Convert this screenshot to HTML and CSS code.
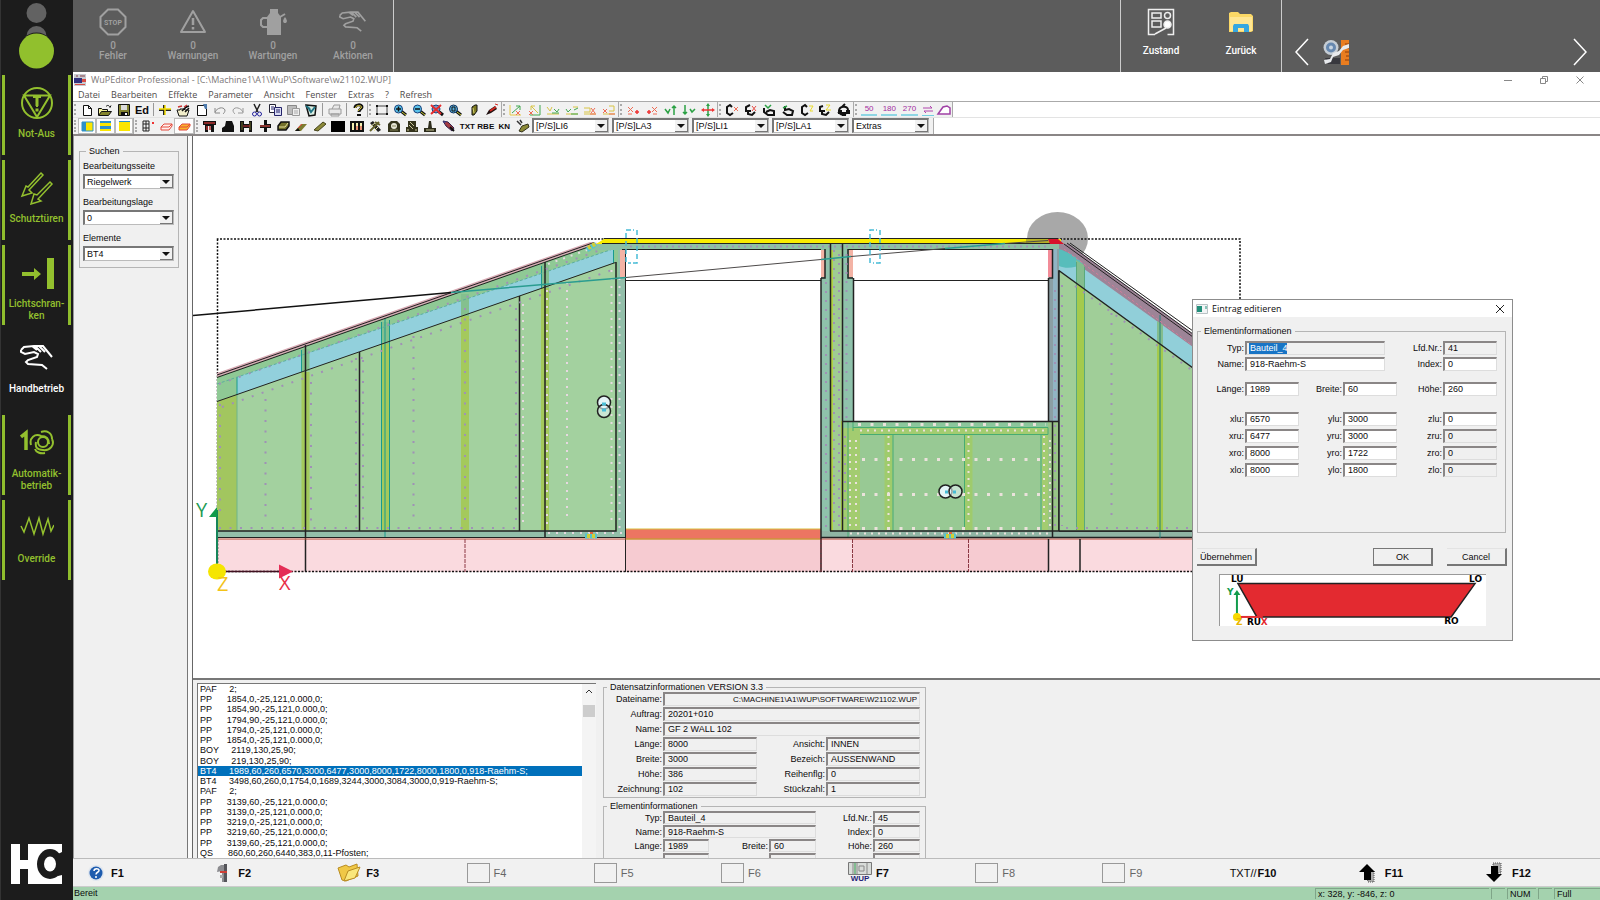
FILE: index.html
```html
<!DOCTYPE html>
<html lang="de">
<head>
<meta charset="utf-8">
<title>WuPEditor Professional</title>
<link rel="stylesheet" href="styles.css">
</head>
<body>
<nav class="sidebar">
  <svg class="lamp" viewBox="0 0 73 72" aria-hidden="true"><circle cx="36.500" cy="13" r="10" fill="#626262"/><circle cx="36.500" cy="36" r="10" fill="#626262"/><circle cx="36.500" cy="51" r="18.500" fill="#1c1c1c"/><circle cx="36.500" cy="51" r="17.500" fill="#91c02d"/></svg>
  <button class="side"><svg viewBox="0 0 34 34"><circle cx="17" cy="17" r="15"/><path d="M4 9.500h26L17 31zM13 11h8M17 11v10" /><path d="M17 12v8M17 22.500v3" stroke-width="3"/></svg><span>Not-Aus</span></button>
  <button class="side"><svg viewBox="0 0 34 34"><path d="M21 2l2 2L9 19l3 3-10 3 4-10 2 1zM30 11l2 2-14 15 3 2-10 3 3-10 3 1z" stroke-width="1.500"/></svg><span>Schutztüren</span></button>
  <button class="side"><svg viewBox="0 0 34 34"><path d="M27 2h7v31h-7zM2 16h12v-4l7 6-7 6v-4H2z" fill="currentColor" stroke="none"/></svg><span>Lichtschran-<br>ken</span></button>
  <button class="side active"><svg viewBox="0 0 34 34"><path d="M1 9l3-3 10-1h9l9 11M1 9v2l4 2 9-2 4 2-1 3-9 3-2 2 2 2 14 1 5 4M12 5l5 4M15 5l6 6M19 5l6 6"/></svg><span>Handbetrieb</span></button>
  <button class="side"><svg viewBox="0 0 34 34"><path d="M1 11l5-4v17" stroke-width="3.500"/><circle cx="23" cy="16" r="5"/><path d="M11 19c-2-7 4-12 10-9 6 0 8 3 8 8M32 13c3 6-2 12-9 11-6 0-8-3-7-8M21 6c6-2 11 1 11 7M25 27c-5 1-9-1-10-4"/></svg><span>Automatik-<br>betrieb</span></button>
  <button class="side"><svg viewBox="0 0 34 34"><path d="M1 15l3 6L9 7l5 16 5-16 4 16 5-15 3 12 3-6" stroke-width="1.500"/></svg><span>Override</span></button>
  <svg class="logo" viewBox="0 0 51 40" role="img" aria-label="Logo"><path d="M0 0h9v16h8V0h34v40H17V25H9v15H0z" fill="#fff"/><ellipse cx="39" cy="20" rx="13" ry="15" fill="#1c1c1c"/><path d="M44 2l7-2v12z" fill="#fff"/><path d="M45 11l6-3v23l-4 1z" fill="#1c1c1c"/><ellipse cx="39" cy="20" rx="6" ry="7.500" fill="#fff"/></svg>
</nav>

<div class="app">
<header class="top">
  <div class="alerts">
    <button class="alert"><svg viewBox="0 0 28 28"><path d="M9 1.500h10l7.500 7.500v10L19 26.500H9L1.500 19V9z"/><text x="14" y="17" text-anchor="middle">STOP</text></svg><b>0</b><span>Fehler</span></button>
    <button class="alert"><svg viewBox="0 0 28 28"><path d="M14 3L26 24H2z" stroke-linejoin="round"/><path d="M14 10v7M14 19v2.500" stroke-width="2.500"/></svg><b>0</b><span>Warnungen</span></button>
    <button class="alert"><svg viewBox="0 0 28 28"><path d="M8 27V9l3-4V1h8v4l3 4v18z" fill="currentColor" stroke="none"/><path d="M8 10H4l-2 2v5l2 2h4M21 9l5-3"/><path d="M26 9c3 4 2 6 0 6s-3-2 0-6z" fill="currentColor" stroke="none"/></svg><b>0</b><span>Wartungen</span></button>
    <button class="alert"><svg viewBox="0 0 34 34"><path d="M1 9l3-3 10-1h9l9 11M1 9v2l4 2 9-2 4 2-1 3-9 3-2 2 2 2 14 1 5 4M12 5l5 4M15 5l6 6M19 5l6 6"/></svg><b>0</b><span>Aktionen</span></button>
  </div>
  <div class="views">
    <button class="view"><svg viewBox="0 0 28 28"><path d="M8 26.500H1.500v-25h25v25h-6M8 26l11-6" /><path d="M5 5h9v5H5zM5 13h9v6H5z"/><circle cx="20.500" cy="7.500" r="3"/><circle cx="20.500" cy="16.500" r="3.500" fill="#fff"/></svg><span>Zustand</span></button>
    <button class="view"><svg viewBox="0 0 28 28"><path d="M2 5l2-1h7l2 2h11l2 2v15l-2 1H2z" fill="#fbd866" stroke="none"/><path d="M3 9h22v14H3z" fill="#ffe693" stroke="none"/><path d="M7 16h14l1 2v6h-5v-4h-6v4H6v-6z" fill="#36a7e0" stroke="none"/></svg><span>Zurück</span></button>
  </div>
  <div class="tools">
    <button class="chev" aria-label="Vorherige"><svg viewBox="0 0 14 28"><path d="M13 1L1 14l12 13"/></svg></button>
    <button class="saw" aria-label="Maschine"><svg viewBox="0 0 26 26"><path d="M2 19h15v6H5z" fill="#38383e"/><circle cx="8" cy="8.500" r="7.500" fill="#c5cdd5"/><circle cx="8" cy="8.500" r="5" fill="#6688b0"/><circle cx="8" cy="8.500" r="2" fill="#c7d5e2"/><path d="M18 1h8v25h-8z" fill="#e97d20"/><path d="M22 5h4M23 9h3M22 13h4M23 17h3M22 21h4" stroke="#8c3d09"/><path d="M1 21l6-1 3-6 6-2 4-5 6-2v4l-6 2-4 5-6 2-2 5-6 2z" fill="#e8eaed"/></svg></button>
    <button class="chev next" aria-label="Nächste"><svg viewBox="0 0 14 28"><path d="M1 1l12 13L1 27"/></svg></button>
  </div>
</header>

<div class="titlebar">
  <svg class="appicon" viewBox="0 0 12 12"><path d="M0 0h12v12H0z" fill="#c9ccd2"/><path d="M0 4h8v5H0z" fill="#31327e"/><path d="M1 10h10v1H1zM8 5h4v3H8z" fill="#d84c45"/><path d="M2 1h2v2H2zM6 1h5v2H6z" fill="#a8868c"/></svg>
  <h1>WuPEditor Professional - [C:\Machine1\A1\WuP\Software\w21102.WUP]</h1>
  <div class="winbtns">
    <button aria-label="Minimieren"><svg viewBox="0 0 10 10"><path d="M1 5.500h8"/></svg></button>
    <button aria-label="Wiederherstellen"><svg viewBox="0 0 10 10"><path d="M1.500 3.500h5v5h-5zM3.500 3V1.500h5v5H7"/></svg></button>
    <button aria-label="Schließen"><svg viewBox="0 0 10 10"><path d="M1.500 1.500l7 7M8.500 1.500l-7 7"/></svg></button>
  </div>
</div>
<div class="menubar">
  <button>Datei</button><button>Bearbeiten</button><button>Effekte</button><button>Parameter</button><button>Ansicht</button><button>Fenster</button><button>Extras</button><button>?</button><button>Refresh</button>
</div>

<div class="toolbar">
  <div class="tg g1">
    <button aria-label="Neu"><svg viewBox="0 0 16 14"><path d="M4.500 2.500h5l3 3v7h-8zM9.500 2.500v3h3" fill="#fff" stroke="#111"/></svg></button>
    <button aria-label="Öffnen"><svg viewBox="0 0 16 14"><path d="M1.500 12V5.500h3l1 1h5V9" fill="#f4f09a" stroke="#111"/><path d="M1.500 12.500l3-4h10l-3 4z" fill="#84842a" stroke="#111"/><path d="M9 3.500c2-2 3-1 4 1l1-2" fill="none" stroke="#111"/></svg></button>
    <button aria-label="Speichern"><svg viewBox="0 0 16 14"><path d="M2.500 1.500h11v11h-11z" fill="#848432" stroke="#111"/><path d="M5 2h6v5H5z" fill="#ddd"/><path d="M5 9h7v4H5z" fill="#111"/><path d="M9 10h2v2H9z" fill="#fff"/></svg></button>
    <button class="tx big">Ed</button>
    <i></i>
    <button aria-label="Position"><svg viewBox="0 0 16 14"><path d="M7 2v10M2 7h12" stroke="#222" stroke-width="2"/><path d="M8 2v10M2 6h12" stroke="#f6df00" stroke-width="1.500"/></svg></button>
    <button aria-label="Eigenschaften"><svg viewBox="0 0 16 14"><path d="M2 7h3V6h4l1 1h4l-2 6H4z" fill="#f2eecb" stroke="#111"/><path d="M7 8l4-4 3-1M10 9l4-4" stroke="#111" stroke-width="1.500"/><path d="M3 4l4-1M9 4l3-2" stroke="#c33" stroke-width="1.500"/></svg></button>
    <button aria-label="Kopie"><svg viewBox="0 0 16 14"><path d="M3.500 2.500h7l2 2v8h-9z" fill="#fff" stroke="#111"/><path d="M9 1h4v5h-2z" fill="#4f7bad"/></svg></button>
    <button aria-label="Rückgängig"><svg viewBox="0 0 16 14"><path d="M3 5v5h5M3 9c2-4 8-6 10-2 0 2-1 3-2 4" fill="none" stroke="#888"/></svg></button>
    <button aria-label="Wiederholen"><svg viewBox="0 0 16 14"><path d="M13 5v5H8M13 9C11 5 5 3 3 7c0 2 1 3 2 4" fill="none" stroke="#999"/></svg></button>
    <button aria-label="Ausschneiden"><svg viewBox="0 0 16 14"><path d="M5 1l4 8M11 1L7 9" stroke="#222" stroke-width="1.500"/><circle cx="5.500" cy="11" r="2" fill="none" stroke="#24229d"/><circle cx="10.500" cy="11" r="2" fill="none" stroke="#24229d"/></svg></button>
    <button aria-label="Kopieren"><svg viewBox="0 0 16 14"><path d="M2.500 1.500h6v8h-6z" fill="#fff" stroke="#223"/><path d="M7.500 4.500h7v8h-7z" fill="#d9dcf3" stroke="#24236a"/><path d="M4 4h3M4 6h3M9 7h4M9 9h4" stroke="#24236a"/></svg></button>
    <button aria-label="Einfügen"><svg viewBox="0 0 16 14"><path d="M2.500 2.500h9v9h-9z" fill="#bbb" stroke="#888"/><path d="M7.500 5.500h7v7h-7z" fill="#eee" stroke="#999"/><path d="M9 8h4M9 10h4" stroke="#aaa"/></svg></button>
    <button aria-label="Löschen"><svg viewBox="0 0 16 14"><path d="M3 2l10 1-1 9-6 1z" fill="#dcefe4" stroke="#111" stroke-width="1.500"/><path d="M5 4l3 5 4-5M3 3l4 3" fill="none" stroke="#217484" stroke-width="2"/></svg></button>
    <i></i>
    <button aria-label="Drucken"><svg viewBox="0 0 16 14"><path d="M2 6h12v5H2zM5 6l2-4h6l-1 4M4 11h8v2H4z" fill="#e8e8e8" stroke="#9a9a9a"/></svg></button>
    <i></i>
    <button aria-label="Hilfe"><svg viewBox="0 0 16 14"><path d="M5 5c0-4 7-4 7-1 0 2-3 2-3 5" fill="none" stroke="#111" stroke-width="3"/><path d="M5.500 5c0-3 6-3 6-1 0 2-3 2-3 4" fill="none" stroke="#e3d13a"/><path d="M7 11h4v2H7z" fill="#111"/></svg></button>
  </div>
  <div class="tg g2">
    <button aria-label="Rahmen"><svg viewBox="0 0 16 14"><path d="M3 3h10v8H3z" fill="none" stroke="#444"/><path d="M2 2h2v2H2zM12 2h2v2h-2zM2 10h2v2H2zM12 10h2v2h-2z" fill="#111"/></svg></button>
    <button aria-label="Vergrößern"><svg viewBox="0 0 16 14"><path d="M9 8l5 4" stroke="#111" stroke-width="3"/><path d="M10 9l4 3" stroke="#cc3"/><circle cx="6.500" cy="6" r="4" fill="#58c2ea" stroke="#1c407a"/><path d="M4 6h5M6.500 3.500v5" stroke="#111" stroke-width="1.500"/></svg></button>
    <button aria-label="Verkleinern"><svg viewBox="0 0 16 14"><path d="M9 8l5 4" stroke="#111" stroke-width="3"/><path d="M10 9l4 3" stroke="#cc3"/><circle cx="6.500" cy="6" r="4" fill="#58c2ea" stroke="#1c407a"/><path d="M4 6h5" stroke="#111" stroke-width="1.500"/></svg></button>
    <button aria-label="Zoom aus"><svg viewBox="0 0 16 14"><path d="M9 8l5 4" stroke="#111" stroke-width="3"/><circle cx="7" cy="6" r="4" fill="#6d9fd0" stroke="#1c407a"/><path d="M2 2l10 9M12 2L2 11" stroke="#e62d2d" stroke-width="2"/></svg></button>
    <button aria-label="Zoom alles"><svg viewBox="0 0 16 14"><path d="M9 8l5 4" stroke="#111" stroke-width="3"/><path d="M10 9l4 3" stroke="#cc3"/><circle cx="6.500" cy="6" r="4" fill="#58aeda" stroke="#10305a"/><path d="M5 4h3v4H5z" fill="none" stroke="#111"/></svg></button>
    <button aria-label="Ansicht"><svg viewBox="0 0 16 14"><path d="M6 4l3-2h2v6l-3 4H6z" fill="#7d7a22" stroke="#111"/><path d="M7 5l1 5" stroke="#d5d071"/></svg></button>
    <button aria-label="Zeichnen"><svg viewBox="0 0 16 14"><path d="M2 12l3-5 6-4 2 3-6 4z" fill="#201010"/><path d="M6 8l6-4" stroke="#d42a22" stroke-width="2"/><path d="M11 1l3 1" stroke="#d42a22"/></svg></button>
  </div>
  <div class="tg g3">
    <button aria-label="Achse 1"><svg viewBox="0 0 16 14"><path d="M2 12V2M2 12h11" stroke="#e4c944"/><path d="M4 10l8-7M8 3h4v4" stroke="#42a851" fill="none"/><path d="M8 8l4 4M12 8l-4 4" stroke="#ee6c55"/></svg></button>
    <button aria-label="Achse 2"><svg viewBox="0 0 16 14"><path d="M13 2v10H3" stroke="#42a851" fill="none"/><path d="M4 3l7 7M4 7V3h4" stroke="#d8c444" fill="none"/><path d="M2 8l4 4M6 8l-4 4" stroke="#ee6c55"/></svg></button>
    <button aria-label="Spiegeln 1"><svg viewBox="0 0 16 14"><path d="M2 4l3 4 2-4M2 11h12" stroke="#d8c444" fill="none"/><path d="M7 10h7M9 6l3 3 2-3" stroke="#42a851" fill="none"/></svg></button>
    <button aria-label="Spiegeln 2"><svg viewBox="0 0 16 14"><path d="M9 4h5M2 11h12" stroke="#d8c444" fill="none"/><path d="M2 6l2 3 3-3M7 11h7M10 7l4-2" stroke="#42a851" fill="none"/></svg></button>
    <button aria-label="Spiegeln 3"><svg viewBox="0 0 16 14"><path d="M2 5h6v4H2M2 11h12" stroke="#d8c444" fill="none"/><path d="M9 5l4 5M13 5l-4 5M8 11h6" stroke="#ee6c55"/></svg></button>
    <button aria-label="Spiegeln 4"><svg viewBox="0 0 16 14"><path d="M8 3h5v5H8M2 11h12" stroke="#d8c444" fill="none"/><path d="M2 6l4 4M6 6l-4 4M8 11h6" stroke="#ee6c55"/></svg></button>
  </div>
  <div class="tg g4">
    <button aria-label="Knoten ein"><svg viewBox="0 0 16 14"><path d="M3 4l5 5M8 4L3 9M3 11h4" stroke="#ee6c55"/><path d="M10 9h4M12 7v4" stroke="#e33" stroke-width="1.500"/></svg></button>
    <button aria-label="Knoten aus"><svg viewBox="0 0 16 14"><path d="M8 4l5 5M13 4L8 9M9 11h4" stroke="#ee6c55"/><path d="M3 9h4M5 7v4" stroke="#e33" stroke-width="1.500"/></svg></button>
    <button aria-label="Nach oben"><svg viewBox="0 0 16 14"><path d="M3 6l3 4 2-4M12 12V3M10 5l2-2 2 2" fill="none" stroke="#2ba144" stroke-width="1.500"/></svg></button>
    <button aria-label="Nach unten"><svg viewBox="0 0 16 14"><path d="M4 2v9M2 9l2 2 2-2M9 6l2 3 3-3" fill="none" stroke="#2ba144" stroke-width="1.500"/></svg></button>
    <button aria-label="Verschieben"><svg viewBox="0 0 16 14"><path d="M8 2v10" stroke="#2ba144" stroke-width="1.500"/><path d="M3 7h10" stroke="#e33" stroke-width="1.500"/><path d="M6 3h4L8 0zM6 11h4l-2 3z" fill="#2ba144"/><path d="M4 5v4L1 7zM12 5v4l3-2z" fill="#e33"/></svg></button>
  </div>
  <div class="tg g5">
    <button aria-label="Drehen X"><svg viewBox="0 0 16 14"><path d="M8 4L6 2 3 4v6l3 2 3-2" fill="none" stroke="#111" stroke-width="2"/><path d="M10 4l4 4M14 4l-4 4" stroke="#ee6c55"/></svg></button>
    <button aria-label="Drehen -X"><svg viewBox="0 0 16 14"><path d="M8 8h-3v3l4 1 3-3M3 9V4l4-2" fill="none" stroke="#111" stroke-width="2"/><path d="M9 3l4 5M13 3L9 8" stroke="#e64a43"/></svg></button>
    <button aria-label="Drehen Y"><svg viewBox="0 0 16 14"><path d="M3 5v4l4 3h6V8L9 7l-4 2" fill="none" stroke="#111" stroke-width="2"/><path d="M4 2l3 3 3-3" fill="none" stroke="#2ba144" stroke-width="1.500"/></svg></button>
    <button aria-label="Drehen -Y"><svg viewBox="0 0 16 14"><path d="M3 9l4 3h5l1-4-4-2-4 1V3" fill="none" stroke="#111" stroke-width="2"/><path d="M3 5l4-2" stroke="#2ba144" stroke-width="1.500"/></svg></button>
    <button aria-label="Drehen Z"><svg viewBox="0 0 16 14"><path d="M8 4L6 2 3 4v6l3 2 3-2" fill="none" stroke="#111" stroke-width="2"/><path d="M10 3h4l-3 5h3" fill="none" stroke="#eadb2c"/></svg></button>
    <button aria-label="Drehen -Z"><svg viewBox="0 0 16 14"><path d="M8 8H5v3l4 1 3-3M3 9V4l3-1" fill="none" stroke="#111" stroke-width="2"/><path d="M9 2h4L9 7h5" fill="none" stroke="#eadb2c"/></svg></button>
    <button aria-label="Frei drehen"><svg viewBox="0 0 16 14"><path d="M3 8c0-5 9-6 9-1M6 4l3-3M2 9l4 3M9 11l4-3" fill="none" stroke="#111" stroke-width="2"/><path d="M2 7h4v4H2zM10 7h4v4h-4zM6 9h4v4H6z" fill="#111"/></svg></button>
  </div>
  <div class="tg g6">
    <button class="tx rot">50</button><button class="tx rot">180</button><button class="tx rot">270</button>
    <button aria-label="Tauschen"><svg viewBox="0 0 16 14"><path d="M3 5h9l-2-2M13 8H4l2 2" fill="none" stroke="#b044ad"/><path d="M2 12.500h12" stroke="#74cfe0"/></svg></button>
    <button aria-label="Kontur"><svg viewBox="0 0 16 14"><path d="M2 11l5-7 4-1 3 2v6z" fill="#fff" stroke="#a040a5" stroke-width="1.500"/></svg></button>
  </div>
</div>

<div class="toolbar second">
  <div class="tg h1">
    <button class="on" aria-label="Layout links"><svg viewBox="0 0 16 14"><path d="M3 3h11v9H3z" fill="#fbe500" stroke="#2e91c8"/><path d="M3 3h4v9H3z" fill="#2e91c8"/></svg></button>
    <button class="on" aria-label="Layout Mitte"><svg viewBox="0 0 16 14"><path d="M3 3h11v9H3z" fill="#fbe500"/><path d="M3 2h11v2H3zM3 7h11v3H3z" fill="#2e91c8"/></svg></button>
    <button class="on" aria-label="Layout voll"><svg viewBox="0 0 16 14"><path d="M3 3h11v9H3z" fill="#fbe500"/><path d="M3 2h11v1H3z" fill="#2e91c8"/></svg></button>
  </div>
  <div class="tg h2">
    <button aria-label="Raster"><svg viewBox="0 0 16 14"><path d="M3 2h6v10H3zM3 5h6M3 9h6M6 2v10" fill="none" stroke="#222"/><path d="M12 4h2" stroke="#e33" stroke-width="2"/></svg></button>
    <button aria-label="Körper"><svg viewBox="0 0 16 14"><path d="M3 8l3-3h8v2l-3 4H3z" fill="#fff0ed" stroke="#e3483a"/><path d="M3 8h8l3-3" fill="none" stroke="#e3483a"/></svg></button>
    <button class="on" aria-label="Körper gefüllt"><svg viewBox="0 0 16 14"><path d="M3 8l3-3h8v2l-3 4H3z" fill="#f9b22b" stroke="#e3483a"/><path d="M3 8h8l3-3" fill="none" stroke="#e3483a"/></svg></button>
  </div>
  <div class="tg h3">
    <button aria-label="Element 1"><svg viewBox="0 0 16 14"><path d="M2 2h13v4h-2v7h-3V7H7v6H4V6H2z" fill="#111"/><path d="M3 4h11M9 7v4M6 7v4" stroke="#b5322f" stroke-width="1.500"/></svg></button>
    <button aria-label="Element 2"><svg viewBox="0 0 16 14"><path d="M2 13V9l3-2 1-5h6l2 5v6z" fill="#111"/></svg></button>
    <button aria-label="Element 3"><svg viewBox="0 0 16 14"><path d="M2 2h4v3h5V2h3v11h-3V9H6v4H2z" fill="#111"/><path d="M4 3v8M12 3v8" stroke="#72702a"/><path d="M5 7h7" stroke="#c33"/></svg></button>
    <button aria-label="Element 4"><svg viewBox="0 0 16 14"><path d="M7 1h3v4h4v4h-4v4H7V9H3V6h4z" fill="#111"/><path d="M3 7h10" stroke="#8b3530" stroke-width="2"/></svg></button>
    <button aria-label="Element 5"><svg viewBox="0 0 16 14"><path d="M3 7l3-4h8v4l-3 4H3z" fill="#74712a" stroke="#111" stroke-width="1.500"/><path d="M4 8h6l3-4" fill="none" stroke="#e5e09a"/></svg></button>
    <button aria-label="Element 6"><svg viewBox="0 0 16 14"><path d="M2 12l6-7h6l-6 7z" fill="#7d7b30"/><path d="M2 12l3-3 2 3z" fill="#111"/><path d="M5 9l4-4" stroke="#e2453e"/></svg></button>
    <button aria-label="Element 7"><svg viewBox="0 0 16 14"><path d="M2 11L11 3l3 2-8 7z" fill="#8b8938" stroke="#44421b"/></svg></button>
    <button aria-label="Element 8"><svg viewBox="0 0 16 14"><path d="M1 2h14v11H1z" fill="#000"/></svg></button>
    <button aria-label="Element 9"><svg viewBox="0 0 16 14"><path d="M2 3h12v9H2z" fill="#f3efb0" stroke="#111" stroke-width="2"/><path d="M6 3v9M10 3v9" stroke="#111" stroke-width="2"/><path d="M8 7v4M12 7v4" stroke="#d33"/></svg></button>
    <button aria-label="Element 10"><svg viewBox="0 0 16 14"><path d="M3 4l3-2 8 9-3 2z" fill="#222"/><path d="M3 12l9-9M8 3l5 3" stroke="#63612b" stroke-width="2"/><path d="M3 8l5-4M7 12l4-4" stroke="#e8e4a0"/></svg></button>
    <button aria-label="Element 11"><svg viewBox="0 0 16 14"><path d="M2 5l3-3h6l3 3v8H2z" fill="#33331b"/><circle cx="8" cy="7" r="3" fill="#e8e8d8"/><path d="M6 7h4M4 11h8" stroke="#85855a"/></svg></button>
    <button aria-label="Element 12"><svg viewBox="0 0 16 14"><path d="M2 8h12v5H2zM4 2h8v7l-4 3-4-3z" fill="#34331b"/><path d="M6 3l4 4M5 6l4 4M3 11h2M11 11h2" stroke="#c9c79a"/></svg></button>
    <button aria-label="Element 13"><svg viewBox="0 0 16 14"><path d="M2 9h4l1-7h2l1 7h4v4H2z" fill="#2d2c1b"/><path d="M4 11h8" stroke="#c9c79a"/></svg></button>
    <button aria-label="Element 14"><svg viewBox="0 0 16 14"><path d="M2 2l5 1 6 6-2 3-6-5z" fill="#a53b42" stroke="#33224d"/><path d="M9 8l4 4" stroke="#111" stroke-width="2"/><path d="M2 3h3" stroke="#349"/></svg></button>
    <button class="tx">TXT</button><button class="tx">RBE</button><button class="tx">KN</button>
    <button aria-label="Element 18"><svg viewBox="0 0 16 14"><path d="M4 12l3-5 6-2 1 3-7 5z" fill="#8b8938" stroke="#33321b"/><path d="M2 2l4 4M5 1l2 3" stroke="#333" stroke-width="1.500"/></svg></button>
  </div>
  <div class="combos">
    <span class="combo"><select aria-label="LI6"><option>[P/S]LI6</option></select></span>
    <span class="combo"><select aria-label="LA3"><option>[P/S]LA3</option></select></span>
    <span class="combo"><select aria-label="LI1"><option>[P/S]LI1</option></select></span>
    <span class="combo"><select aria-label="LA1"><option>[P/S]LA1</option></select></span>
    <span class="combo"><select aria-label="Extras"><option>Extras</option></select></span>
  </div>
</div>

<div class="work">
  <aside class="search">
    <fieldset class="box">
      <legend>Suchen</legend>
      <label for="s1">Bearbeitungsseite</label><span class="combo"><select id="s1"><option>Riegelwerk</option></select></span>
      <label for="s2">Bearbeitungslage</label><span class="combo"><select id="s2"><option>0</option></select></span>
      <label for="s3">Elemente</label><span class="combo"><select id="s3"><option>BT4</option></select></span>
    </fieldset>
  </aside>
  <main class="mdi">
    <section class="viewport">
      <svg class="drawing" viewBox="193 136 1407 538" preserveAspectRatio="xMinYMin meet" role="img" aria-label="Wandelement">
        <ellipse cx="1057.500" cy="238.500" rx="30.500" ry="26.500" fill="#a8a8a8"/>
        <path d="M1028 248h24v17c-12-1-21-8-24-17z" fill="#c9c9c9"/>
        <!-- base plate -->
        <path d="M217 539h1023v33H217z" fill="#fadadf"/>
        <path d="M626 539h195v33H626zM853 539h195v33H853z" fill="#f6cbd1"/>
        <path d="M217.500 239V571.500H1240V239z" fill="none" stroke="#111" stroke-width="1.500" stroke-dasharray="2 1.500"/>
        <!-- left gable -->
        <path d="M217 376L594 244h30v288H217z" fill="#8fc995"/>
        <path d="M217 373L590 242l8 1L217 377z" fill="#d8aab4"/>
        <path d="M237 377L613 249v14L237 395z" fill="#92d0dc"/>
        <path d="M217 401.500L615.500 262.500V531H217z" fill="#a3d19f"/>
        <path d="M217 401.500l20-7V530h-20z" fill="#a2c65f"/>
        <g fill="#a4c95c">
          <path d="M301.500 372h8v158h-8zM381 344h8v186h-8zM461 316h8v214h-8zM541 288h8v242h-8z"/>
        </g>
        <path d="M301.500 349h8v22h-8zM381 322h8v22h-8zM461 294h8v22h-8zM541 264h8v24h-8z" fill="#84c08e"/>
        <path d="M217 531h409v7H217zM618 249h7v289h-7z" fill="#93bfaa"/>
        <g fill="none" stroke="#189a8d">
          <path d="M385 318V538M381.500 322v208M389.500 320v210M237 377v18M541.500 266v22M301.500 350v22M613.500 249v14"/>
          <path d="M217 384L613 249" stroke-dasharray="3 2" stroke="#5cae9e"/>
          <path d="M237 395v135" stroke="#6fb68a"/>
        </g>
        <g fill="none" stroke="#222">
          <path d="M217 375L594 242.500M217 377.500L594 245M217 401.500L615.500 262.500"/>
          <path d="M305.500 345V571.500M359.500 352V531M519.500 296V531M545 262v276" stroke-width="1.500"/>
          <path d="M217 531H616V262" stroke-width="1.500"/>
          <path d="M217 537.500H626M625.500 249V572"/>
        </g>
        <g fill="none" stroke="#a091b6" stroke-width="2" stroke-dasharray="2 8.500">
          <path d="M265.500 399V520M413.500 336V522M465 308V522M311 382V522M356 358V522M363 360V522M220 404V515M516 308V522M219 384L612 246M222 407L612 270M219 528H520"/>
        </g>
        <g fill="none" stroke="#e6d9e0" stroke-width="2" stroke-dasharray="2 6">
          <path d="M523 304V525M567 282V520M611.500 270V526M619.500 278V534M548 533H622M548 264L590 249M547 290V525"/>
        </g>
        <!-- door opening -->
        <path d="M626 249h195v281H626z" fill="#fff"/>
        <path d="M626 529h195v10H626z" fill="#ec7562"/>
        <path d="M217 539h976" stroke="#b44a35"/>
        <path d="M626 529h195M626 539h195" stroke="#d7bd3c"/>
        <!-- centre posts -->
        <path d="M821 244h38v294h-38z" fill="#8fc2ab"/>
        <path d="M831 244h11v287h-11z" fill="#9fcb93"/>
        <path d="M831 244h2v287h-2zM841 421h2v110h-2z" fill="#b1d143"/>
        <path d="M853 249h195v172H853z" fill="#fff"/>
        <!-- header beam -->
        <path d="M594 244h465v6H594z" fill="#8dc0a3"/>
        <path d="M604 239h457v5H596z" fill="#f9ec00"/>
        <path d="M1026 239h26v5h-26z" fill="#b6af27"/>
        <path d="M604 238.500h454M602 243.500h450" stroke="#222"/>
        <path d="M622 249.500H821M848 249.500h204M626 280.500H821M853 280.500h195M853 421.500h206" stroke="#222"/>
        <path d="M630 246.500H1048" stroke="#a091b6" stroke-width="2" stroke-dasharray="2 4"/>
        <path d="M620 250h5v27h-5zM821 250h4v27h-4zM849 250h4v27h-4z" fill="#f3b3a5"/>
        <!-- right post and parapet -->
        <path d="M1048.500 278h4V249h7v289h-11z" fill="#8b9fa4"/>
        <path d="M1048 250h4v27h-4z" fill="#f28c98"/>
        <path d="M1053 249h4v172h-4z" fill="#91b4c4"/>
        <path d="M843 422h216v116H843z" fill="#8cc79c"/>
        <path d="M843 428h216v102H843z" fill="#a3cc70"/>
        <path d="M860 434h182v96H860z" fill="#98c994"/>
        <path d="M884.500 434h8v96h-8zM964.500 434h8v96h-8z" fill="#9fcb6c"/>
        <path d="M1048 421h11v110h-11z" fill="#98c486"/>
        <path d="M843 531h350v7H843zM821 531h22v7h-22z" fill="#90b5a4"/>
        <path d="M853 427.500h195v7H860M893 434v96M964.500 434v96M1041 434v96M848 421V538M853 421v10" fill="none" stroke="#46ac72"/>
        <g fill="none" stroke="#222" stroke-width="1.500">
          <path d="M821 278V572M830.500 244V531M842.500 244V531M853.500 278V421M825 249v29h-4M848 249v29h5M1048.500 278V421M1052.500 249v29h-4M1052.500 421v117M1059 271V531"/>
          <path d="M830 531H1193M821 537.500H1193M843 421.500h216"/>
        </g>
        <g fill="none" stroke="#a091b6" stroke-width="2" stroke-dasharray="2 7">
          <path d="M826 282V530M834 250V526M839 254V526M846.500 254V418M1055 290V526M845 436V526"/>
        </g>
        <g fill="none" stroke="#ebe2dc" stroke-width="2" stroke-dasharray="2 5">
          <path d="M850 440V526M856 440V526M1044 436V526M1050 440V526M888.500 436V526M968.500 436V526M860 430.500H1044M850 533.500H1050"/>
          <path d="M858 424.500H1046M862 459.500H1042M862 494.500H1042M862 528.500H1042" stroke-width="3" stroke-dasharray="3 9.500"/>
        </g>
        <!-- right gable -->
        <path d="M1059 248l8-4 126 92v195H1059z" fill="#91cfd9"/>
        <path d="M1059 244h10L1193 334v13L1059 251z" fill="#9d8497"/>
        <path d="M1059 249c6 2 18 7 24 15-8 4-17 5-24 2z" fill="#58bdbb"/>
        <path d="M1076 260l8 5v25l-8-6zM1157 321l6 4v21l-6-4z" fill="#84bd8e"/>
        <path d="M1059.500 271L1193 368V531H1059.500z" fill="#a0ce98"/>
        <path d="M1076 284l8 5v241h-8zM1157 342l6 4v184h-6z" fill="#a4ca4c"/>
        <path d="M1076.500 262V530M1084.500 267V530" stroke="#5aa87c"/>
        <path d="M1160 315V538" stroke="#237f78"/>
        <path d="M1064 249L1193 346" stroke="#d07d9a" stroke-dasharray="3 2"/>
        <path d="M1070 243L1193 331M1064 244L1193 337M1067 243L1193 334" fill="none" stroke="#222"/>
        <path d="M1059.500 271L1193 368M1059 270V531M1059 531H1193" fill="none" stroke="#222" stroke-width="1.500"/>
        <path d="M1062 285V526M1111.500 313V520M1075 286L1193 371M1066 528H1193" fill="none" stroke="#a091b6" stroke-width="2" stroke-dasharray="2 8"/>
        <path d="M1048 239h10l6 5h-14z" fill="#d8122c"/>
        <!-- base dividers -->
        <path d="M465 539v33M821 539v33M852.500 539v33M968.500 539v33" stroke="#8c3944" stroke-dasharray="4 1"/>
        <path d="M1048.500 539v33M1080 539v33" stroke="#222" stroke-width="1.500"/>
        <!-- tool path -->
        <path d="M193 315.500L451 292.500" stroke="#111" stroke-width="1.500"/>
        <path d="M451 292.500L626 277.500M821 259.500l30-3M945 248.500l60-5" stroke="#2a9c90" stroke-width="1.500"/>
        <path d="M626 277.500L821 259.500M851 256.500L945 248.500M1005 243.500l43-3" stroke="#4d4a4a"/>
        <!-- markers -->
        <g fill="none" stroke="#48bcd6" stroke-width="1.500" stroke-dasharray="5 3">
          <path d="M631 230h-5v33h5M633 263h4V230h-4M874 230h-4v33h4M876 263h4V230h-4"/>
        </g>
        <g fill="#e4f4f7" stroke="#222" stroke-width="1.500">
          <circle cx="604" cy="402.500" r="6.500"/><circle cx="604" cy="411" r="6.500" fill-opacity=".6"/>
          <circle cx="945.500" cy="491.500" r="6.500"/><circle cx="955.500" cy="491.500" r="6.500" fill-opacity=".6"/>
        </g>
        <path d="M602 404h4M602 410h4M945 492h3M953 492h3" stroke="#48bcd6" stroke-width="3"/>
        <path d="M585 536h12M944 536h12M587 250l9-6" stroke="#55c4cd" stroke-width="5" stroke-dasharray="4 1"/>
        <path d="M587 536h8M946 536h8M588 248l7-4" stroke="#d1cf35" stroke-width="4" stroke-dasharray="3 2"/>
        <path d="M590 533h3M949 533h3" stroke="#e2653f" stroke-width="2"/>
        <!-- axes -->
        <path d="M217 510v60" stroke="#16855a" stroke-width="2"/>
        <path d="M217 571.500h66" stroke="#401020" stroke-width="1.500"/>
        <path d="M209 517h8v-10z" fill="#119b4b"/>
        <path d="M279 564.500l14 7-14 7z" fill="#e42e56"/>
        <ellipse cx="217" cy="571.500" rx="9" ry="8" fill="#f5e500"/>
        <g class="axis"><text x="196" y="517" fill="#1e9b53">Y</text><text x="217" y="591" fill="#f3c318">Z</text><text x="279" y="590" fill="#e83048">X</text></g>
      </svg>

      <section class="dialog" role="dialog" aria-labelledby="dt">
        <header><svg viewBox="0 0 12 10"><path d="M.5.500h11v9H.5z" fill="#f1f4f5" stroke="#b9c2c5"/><path d="M1 2h5v6H1z" fill="#23907b"/><path d="M10 2v3" stroke="#23907b"/></svg><h2 id="dt">Eintrag editieren</h2><button aria-label="Schließen"><svg viewBox="0 0 10 10"><path d="M1 1l8 8M9 1L1 9"/></svg></button></header>
        <fieldset class="box dgrid">
          <legend>Elementinformationen</legend>
          <label for="d1">Typ:</label><input id="d1" class="wide sel" value="Bauteil_4" readonly><label for="d2">Lfd.Nr.:</label><input id="d2" class="ro" value="41" readonly>
          <label for="d3">Name:</label><input id="d3" class="wide" value="918-Raehm-S"><label for="d4">Index:</label><input id="d4" value="0">
          <label for="d5">Länge:</label><input id="d5" value="1989"><label for="d6">Breite:</label><input id="d6" value="60"><label for="d7">Höhe:</label><input id="d7" value="260">
          <label for="e1">xlu:</label><input id="e1" value="6570"><label for="e2">ylu:</label><input id="e2" value="3000"><label for="e3">zlu:</label><input id="e3" value="0">
          <label for="e4">xru:</label><input id="e4" value="6477"><label for="e5">yru:</label><input id="e5" value="3000"><label for="e6">zru:</label><input id="e6" class="ro" value="0" readonly>
          <label for="e7">xro:</label><input id="e7" value="8000"><label for="e8">yro:</label><input id="e8" value="1722"><label for="e9">zro:</label><input id="e9" class="ro" value="0" readonly>
          <label for="ea">xlo:</label><input id="ea" value="8000"><label for="eb">ylo:</label><input id="eb" value="1800"><label for="ec">zlo:</label><input id="ec" class="ro" value="0" readonly>
        </fieldset>
        <div class="actions"><button>Übernehmen</button><button class="default">OK</button><button>Cancel</button></div>
        <svg class="preview" viewBox="1219 574 267 51" role="img" aria-label="Bauteil"><path d="M1237 582.500H1475L1451 616H1256z" fill="#e32a30" stroke="#222" stroke-width="1.500"/><path d="M1236 615v-22" stroke="#119b4b" stroke-width="2"/><path d="M1232.500 594h7l-3.500-5z" fill="#119b4b"/><path d="M1236 616h26" stroke="#e32a30" stroke-width="2"/><circle cx="1236" cy="616" r="4" fill="#f8d800"/><text x="1230" y="581">LU</text><text x="1469" y="581">LO</text><text x="1246" y="624">RU</text><text x="1260" y="624" fill="#e32a30">X</text><text x="1444" y="623">RO</text><text x="1226" y="594" fill="#119b4b">Y</text><text x="1235" y="624" fill="#e8b400">Z</text></svg>
      </section>
    </section>

    <section class="data">
      <div class="listbox">
        <ul>
          <li>PAF     2;</li><li>PP      1854,0,-25,121,0.000,0;</li><li>PP      1854,90,-25,121,0.000,0;</li><li>PP      1794,90,-25,121,0.000,0;</li><li>PP      1794,0,-25,121,0.000,0;</li><li>PP      1854,0,-25,121,0.000,0;</li><li>BOY     2119,130,25,90;</li><li>BOY     219,130,25,90;</li><li class="cur">BT4     1989,60,260,6570,3000,6477,3000,8000,1722,8000,1800,0,918-Raehm-S;</li><li>BT4     3498,60,260,0,1754,0,1689,3244,3000,3084,3000,0,919-Raehm-S;</li><li>PAF     2;</li><li>PP      3139,60,-25,121,0.000,0;</li><li>PP      3139,0,-25,121,0.000,0;</li><li>PP      3219,0,-25,121,0.000,0;</li><li>PP      3219,60,-25,121,0.000,0;</li><li>PP      3139,60,-25,121,0.000,0;</li><li>QS      860,60,260,6440,383,0,11-Pfosten;</li>
        </ul>
        <div class="scroll"><svg viewBox="0 0 8 5"><path d="M1 4l3-3 3 3"/></svg><span></span></div>
      </div>
      <div class="info">
        <fieldset class="box set">
          <legend>Datensatzinformationen VERSION 3.3</legend>
          <label for="f1">Dateiname:</label><input id="f1" class="full path" value="C:\MACHINE1\A1\WUP\SOFTWARE\W21102.WUP" readonly>
          <label for="f2">Auftrag:</label><input id="f2" class="full" value="20201+010" readonly>
          <label for="f3">Name:</label><input id="f3" class="full" value="GF 2 WALL 102" readonly>
          <label for="f4">Länge:</label><input id="f4" value="8000" readonly><label for="f5">Ansicht:</label><input id="f5" value="INNEN" readonly>
          <label for="f6">Breite:</label><input id="f6" value="3000" readonly><label for="f7">Bezeich:</label><input id="f7" value="AUSSENWAND" readonly>
          <label for="f8">Höhe:</label><input id="f8" value="386" readonly><label for="f9">Reihenflg:</label><input id="f9" value="0" readonly>
          <label for="fa">Zeichnung:</label><input id="fa" value="102" readonly><label for="fb">Stückzahl:</label><input id="fb" value="1" readonly>
        </fieldset>
        <fieldset class="box elem">
          <legend>Elementinformationen</legend>
          <label for="g1">Typ:</label><input id="g1" class="wide" value="Bauteil_4" readonly><label for="g2">Lfd.Nr.:</label><input id="g2" value="45" readonly>
          <label for="g3">Name:</label><input id="g3" class="wide" value="918-Raehm-S" readonly><label for="g4">Index:</label><input id="g4" value="0" readonly>
          <label for="g5">Länge:</label><input id="g5" value="1989" readonly><label for="g6">Breite:</label><input id="g6" value="60" readonly><label for="g7">Höhe:</label><input id="g7" value="260" readonly>
          <span></span><input aria-label="x" readonly><span></span><input aria-label="y" readonly><span></span><input aria-label="z" readonly>
        </fieldset>
      </div>
    </section>
  </main>
</div>

<div class="fkeys">
  <button><svg viewBox="0 0 22 22"><circle cx="11" cy="11" r="8" fill="#dfe6ef"/><circle cx="11" cy="11" r="6.500" fill="#1e5cae"/><path d="M9 9c0-3 5-3 5-.5 0 2-3 1.500-3 4M11 14v2" fill="none" stroke="#fff" stroke-width="1.500"/></svg>F1</button>
  <button><svg viewBox="0 0 22 22"><path d="M6 5l3-2h4v17h-3V9L5 10z" fill="#8c8c90"/><path d="M12 2h3v18h-3z" fill="#55555a"/><path d="M8 9h7v2H8z" fill="#cf3e35"/><path d="M8 13h3v3H8z" fill="#aaa"/></svg>F2</button>
  <button><svg class="wideic" viewBox="0 0 26 22"><path d="M2 6l8-3 3 2 8-3 1 12-12 5-4-1z" fill="#f0c846" stroke="#b98c22"/><path d="M8 19l4-10 12-4-5 11z" fill="#fae77b" stroke="#b98c22"/></svg>F3</button>
  <button class="off"><i></i>F4</button>
  <button class="off"><i></i>F5</button>
  <button class="off"><i></i>F6</button>
  <button><span class="wup"><svg viewBox="0 0 24 13"><path d="M.5.500h23v12H.5z" fill="#d8dcd9" stroke="#777"/><path d="M5 1v11M9 1v11M19 1v11M11 4h5v5h-5z" fill="none" stroke="#888"/><path d="M7 1v11" stroke="#2c9c48"/></svg>WUP</span>F7</button>
  <button class="off"><i></i>F8</button>
  <button class="off"><i></i>F9</button>
  <button class="txt"><span>TXT//</span>F10</button>
  <button class="arrow"><svg viewBox="0 0 22 22"><path d="M9 9h8v11h-6z" fill="#aaa" stroke="#555" stroke-dasharray="1 1"/><path d="M10 2l8 8h-4v8H7v-8H2z" fill="#000"/></svg>F11</button>
  <button class="arrow"><svg viewBox="0 0 22 22"><path d="M9 1h8v10H9z" fill="#aaa" stroke="#555" stroke-dasharray="1 1"/><path d="M7 4h7v8h4l-8 8-8-8h5z" fill="#000"/></svg>F12</button>
</div>
<footer class="status"><span class="msg">Bereit</span><span class="xyz">x: 328, y: -846, z: 0</span><span class="gap"></span><span class="num">NUM</span><span class="gap"></span><span class="ful">Full</span></footer>
</div>
</body>
</html>
```
FILE: styles.css
```css
* { box-sizing: border-box; }
body { margin: 0; height: 100vh; display: flex; overflow: hidden; background: #fff; color: #0d0a0c; font: 9px "Liberation Sans", Arial, sans-serif; }
button, input, select { font: inherit; color: inherit; margin: 0; padding: 0; border: 0; border-radius: 0; background: none; }
svg { display: block; }
h1, h2 { margin: 0; font: inherit; }

/* left machine bar */
.sidebar { flex: none; width: 73px; background: #1c1c1c; border-left: 1px solid #333; display: flex; flex-direction: column; align-items: stretch; font: 500 10px Roboto, sans-serif; }
.lamp { width: 73px; height: 72px; margin: 0 0 3px -1px; }
.side { height: 80px; margin: 0 2px 5px 1px; border: solid #8fbd2d; border-width: 0 3px; color: #93c02e; display: flex; flex-direction: column; align-items: center; padding-top: 11px; line-height: 12px; white-space: nowrap; }
.side svg { width: 34px; height: 34px; flex: none; fill: none; stroke: currentColor; stroke-width: 2; margin-bottom: 8px; }
.side span { display: block; margin: 0 -3px; }
.side.active { color: #fff; border-color: transparent; }
.logo { width: 51px; height: 40px; margin: auto 0 16px 10px; }

.app { flex: 1; min-width: 0; display: flex; flex-direction: column; }

/* dark header */
.top { height: 72px; flex: none; background: #5c5c5c; display: flex; font: 500 10px Roboto, sans-serif; }
.alerts { display: flex; width: 321px; border-right: 1px solid #ccc; }
.alert { width: 80px; color: #a0a0a0; display: flex; flex-direction: column; align-items: center; padding-top: 8px; line-height: 10px; }
.alert b { font-weight: 500; margin-top: 5px; }
.alert svg { width: 28px; height: 28px; fill: none; stroke: currentColor; stroke-width: 2; }
.alert text { font: bold 7px Roboto, sans-serif; fill: currentColor; stroke: none; }
.views { margin-left: auto; display: flex; border: solid #ccc; border-width: 0 1px; }
.view { width: 80px; color: #fff; display: flex; flex-direction: column; align-items: center; padding-top: 8px; line-height: 12px; }
.view svg { width: 28px; height: 28px; fill: none; stroke: #eee; stroke-width: 1.5; margin-bottom: 9px; }
.tools { width: 318px; display: flex; align-items: center; padding: 32px 13px 0 13px; }
.chev svg { width: 14px; height: 28px; fill: none; stroke: #fff; stroke-width: 1.5; }
.saw { margin-left: 14px; }
.saw svg { width: 26px; height: 26px; }
.next { margin-left: auto; }

/* window title and menu */
.titlebar { height: 15px; flex: none; display: flex; align-items: center; padding: 0 15px 0 1px; font: 9px "Open Sans", sans-serif; color: #7b7777; }
.appicon { width: 12px; height: 12px; margin-right: 5px; }
.winbtns { margin-left: auto; display: flex; gap: 26px; }
.winbtns svg { width: 10px; height: 10px; fill: none; stroke: #888; }
.menubar { height: 15px; flex: none; display: flex; gap: 11px; padding-left: 5px; font: 9px "Open Sans", sans-serif; color: #4f4b4b; border-bottom: 1px solid #aaa; }

/* toolbars */
.toolbar { height: 16px; flex: none; display: flex; border-bottom: 1px solid #e3e3e3; }
.toolbar.second { height: 18px; border-bottom: 2px solid #8a8686; }
.tg { display: flex; background: #f1f1f1; border-right: 1px solid #aaa; padding-left: 5px; position: relative; }
.tg::before { content: ""; position: absolute; left: 1px; top: 2px; bottom: 2px; border-left: 2px dotted #aaa; }
.tg button { flex: 1; min-width: 0; display: flex; align-items: center; justify-content: center; }
.tg button svg { width: 16px; height: 14px; }
.tg i { width: 1px; margin: 1px 2px; background: #999; }
.tg .on { background: #fdfdfd; border: 1px solid #bbb; }
.tg .tx { font-size: 8px; font-weight: bold; }
.tg .big { font-size: 11px; }
.tg .rot { color: #a32da0; font-weight: normal; border-bottom: 2px solid #8ed6e4; margin: 1px 2px; }
.g1 { width: 295px; } .g2 { width: 134px; } .g3 { width: 117px; } .g4 { width: 99px; } .g5 { width: 136px; } .g6 { width: 99px; }
.h1 { width: 61px; } .h2 { width: 61px; } .h3 { width: 337px; border: 0; }
.combos { display: flex; gap: 3px; background: #f1f1f1; padding-right: 4px; border-right: 1px solid #aaa; }
.combos .combo { width: 77px; height: 15px; }
.combo { display: block; position: relative; height: 15px; }
.combo select { appearance: none; width: 100%; height: 100%; background: #fff; border: 1px solid #bbb; border-top: 2px solid #777; border-left: 2px solid #777; padding-left: 2px; display: block; }
.combo::after { content: ""; position: absolute; right: 1px; top: 2px; bottom: 1px; width: 12px; background: #f1f1f1 linear-gradient(#111, #111) center / 3px 3px no-repeat; border: solid #777; border-width: 0 1px 1px 0; pointer-events: none; }
.combo::before { content: ""; position: absolute; z-index: 1; right: 4px; top: 6px; border: solid transparent; border-width: 4px 4px 0; border-top-color: #111; pointer-events: none; }
.combo::after { background: #f1f1f1; }

/* work area */
.work { flex: 1; min-height: 0; display: flex; background: #fafafa; }
.search { width: 115px; flex: none; background: #f0f0f0; border-right: 1px solid #777; border-left: 1px solid #999; padding: 11px 8px 0 5px; }
.box { margin: 0; min-width: 0; border: 1px solid #b5b5b5; padding: 0; }
.box legend { padding: 0 3px; margin-left: 3px; line-height: 9px; }
.search .box { height: 121px; padding: 5px 4px 0 3px; }
.search label { display: block; line-height: 11px; margin-bottom: 2px; }
.search .combo { height: 15px; margin-bottom: 8px; }
.mdi { flex: 1; min-width: 0; margin-left: 4px; border-left: 1px solid #666; display: flex; flex-direction: column; }
.viewport { flex: 1; min-height: 0; position: relative; background: #fff; }
.drawing { width: 100%; height: 100%; }
.axis text { font: 20px "Open Sans", sans-serif; }

/* dialog */
.dialog { position: absolute; right: 87px; top: 163px; width: 321px; height: 342px; background: #f0f0f0; border: 1px solid #8c8c8c; }
.dialog header { height: 17px; background: #fff; display: flex; align-items: center; padding: 0 7px 0 3px; font: 9px "Open Sans", sans-serif; }
.dialog header > svg { width: 12px; height: 10px; margin-right: 4px; }
.dialog header button { margin-left: auto; }
.dialog header button svg { width: 10px; height: 10px; stroke: #222; }
.dgrid { margin: 10px 6px 0 4px; height: 206px; display: grid; grid-template-columns: 47px 54px 44px 54px 46px 54px; grid-template-rows: 13px 22px 27px 14px 14px 14px 14px; row-gap: 3px; padding-top: 5px; }
.dgrid label, .set label, .elem label { text-align: right; padding-right: 1px; line-height: 14px; white-space: nowrap; }
.box input { width: 100%; min-width: 0; height: 100%; background: #fff; border: 1px solid #ddd; border-top: 2px solid #8a8686; border-left: 2px solid #8a8686; padding: 0 0 1px 3px; }
.dgrid .wide { grid-column: span 3; width: 140px; }
.dgrid input, .dgrid label { height: 14px; }
.dgrid .ro, .dgrid .sel { background-color: #f0f0f0; }
.dgrid .sel { color: #fff; background-image: linear-gradient(#1874c5, #1874c5); background-repeat: no-repeat; background-position: 2px 0; background-size: 38px 11px; }
.actions { display: flex; margin: 15px 5px 0 4px; }
.actions button { width: 60px; height: 18px; border: solid #777; border-width: 0 2px 2px 0; border-top: 1px solid #e3e3e3; }
.actions .default { margin: 0 14px 0 auto; border: 1px solid #777; border-width: 1px 2px 2px 1px; }
.preview { width: 267px; height: 52px; margin: 8px 0 0 26px; background: #fff; border: solid #999; border-width: 1px 0 0 1px; }
.preview text { font: bold 9px "DejaVu Sans", sans-serif; }

/* record list and data */
.data { height: 180px; flex: none; background: #f0f0f0; border-top: 2px solid #777; padding: 3px 0 0 4px; display: flex; overflow: hidden; }
.listbox { width: 399px; flex: none; height: 175px; background: #fff; border: solid #777; border-width: 1px 0 0 1px; display: flex; }
.listbox ul { flex: 1; margin: 0; padding: 0; list-style: none; display: grid; grid-auto-rows: 1fr; }
.listbox li { white-space: pre; padding-left: 2px; line-height: 10px; }
.listbox .cur { background: #0070bb; color: #fff; }
.scroll { width: 14px; background: #f4f4f4; display: flex; flex-direction: column; align-items: center; padding-top: 5px; }
.scroll svg { width: 8px; height: 5px; fill: none; stroke: #333; }
.scroll span { width: 12px; height: 12px; margin-top: 11px; background: #cdcdcd; }
.info { width: 323px; flex: none; margin-left: 7px; }
.info input { background: #f0f0f0; }
.set { height: 115px; padding: 0 5px 7px 0; display: grid; grid-template-columns: 59px 94px 69px 1fr; grid-auto-rows: 1fr; row-gap: 1px; }
.set .full { grid-column: span 3; }
.info .path { font-size: 8px; text-align: right; padding-right: 2px; }
.elem { margin-top: 4px; padding: 0 5px 5px 0; display: grid; grid-template-columns: 59px 46px 60px 47px 57px 1fr; grid-auto-rows: 13px; row-gap: 1px; }
.elem .wide { grid-column: span 3; }

/* function keys and status */
.fkeys { height: 29px; flex: none; background: #f1f1f1; border-top: 1px solid #bbb; border-bottom: 1px solid #ccc; display: grid; grid-template-columns: repeat(11, 1fr) 116px; padding-left: 12px; font: bold 11px "Liberation Sans", sans-serif; }
.fkeys button { display: flex; align-items: center; gap: 4px; text-align: left; }
.fkeys svg { width: 22px; height: 22px; }
.fkeys .wideic { width: 26px; margin-left: -3px; }
.fkeys i { width: 23px; height: 20px; border: 1px solid #999; }
.fkeys .off { font-weight: normal; color: #666; }
.wup { display: flex; flex-direction: column; align-items: center; font-size: 8px; line-height: 8px; color: #241f77; }
.fkeys .wup svg { width: 24px; height: 13px; }
.fkeys .txt { gap: 1px; }
.txt span { font-weight: normal; }
.fkeys .arrow { gap: 6px; }
.status { height: 13px; flex: none; background: #a4d2ae; display: flex; align-items: center; padding-left: 1px; gap: 2px; line-height: 11px; }
.msg { flex: 1; }
.status .xyz, .num, .gap, .ful { height: 11px; border: solid #7fa588; border-width: 1px 0 0 1px; padding-left: 2px; }
.xyz { width: 174px; }
.gap { width: 14px; }
.num { width: 29px; }
.ful { width: 46px; }
```
